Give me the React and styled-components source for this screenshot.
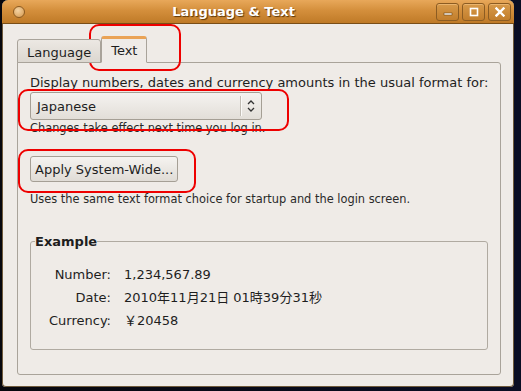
import styled, { createGlobalStyle } from "styled-components";

const Global = createGlobalStyle`
  html, body { margin: 0; padding: 0; }
  body {
    background: #05050f;
    font-family: "DejaVu Sans", "Noto Sans CJK JP", sans-serif;
    font-size: 13px;
    color: #1e1e1e;
  }
`;

const Desktop = styled.div`
  width: 521px;
  height: 391px;
  background: linear-gradient(90deg, #07070d 0%, #0a0d24 100%);
  overflow: hidden;
`;

const Window = styled.div`
  position: relative;
  margin-left: 2px;
  width: 512px;
  height: 387px;
  background: #efebe7;
  border-radius: 6px 6px 4px 4px;
  box-shadow: inset 0 0 0 1px #6f5a3c;
  display: flex;
  flex-direction: column;
  overflow: hidden;
`;

const TitleBar = styled.div`
  height: 23px;
  flex: none;
  display: flex;
  align-items: center;
  padding: 0 3px 0 11px;
  background: linear-gradient(#e8a85a 0%, #d48f3c 45%, #bf7a27 100%);
  border-bottom: 1px solid #7a4e17;
  border-radius: 6px 6px 0 0;
`;

const MenuDot = styled.div`
  width: 10px;
  height: 10px;
  border-radius: 50%;
  border: 1px solid #8a5a22;
  background: radial-gradient(circle at 40% 35%, #f4d3a3, #d4974c);
  flex: none;
`;

const Title = styled.div`
  flex: 1;
  text-align: center;
  font-weight: bold;
  font-size: 13px;
  color: #fff;
  text-shadow: 1px 1px 1px #5a3508;
  padding-left: 6px;
`;

const Controls = styled.div`
  display: flex;
  gap: 3px;
`;

const CtrlButton = styled.div`
  width: 21px;
  height: 16px;
  border: 1px solid #8c5c22;
  border-radius: 3px;
  background: linear-gradient(#d89a4a, #c27e2c);
  box-shadow: inset 0 1px 0 #eab46e;
  display: flex;
  align-items: center;
  justify-content: center;
`;

const Body = styled.div`
  flex: 1;
  padding: 12px 13px 12px 15px;
  display: flex;
  flex-direction: column;
`;

const TabRow = styled.div`
  display: flex;
  align-items: flex-end;
  height: 27px;
  margin-bottom: -1px;
  position: relative;
  z-index: 1;
`;

const Tab = styled.div`
  height: ${(p) => (p.$active ? "27px" : "24px")};
  box-sizing: border-box;
  padding: 0 9px;
  display: flex;
  align-items: center;
  border: 1px solid #a9a39a;
  border-bottom: ${(p) => (p.$active ? "1px solid #efebe7" : "1px solid #a9a39a")};
  border-top: ${(p) => (p.$active ? "3px solid #eaa356" : "1px solid #a9a39a")};
  border-radius: 3px 3px 0 0;
  background: ${(p) => (p.$active ? "#efebe7" : "linear-gradient(#ece8e3, #dcd7d0)")};
  font-size: 13px;
  color: #1e1e1e;
  padding-top: ${(p) => (p.$active ? "0" : "2px")};
`;

const Panel = styled.div`
  flex: 1;
  border: 1px solid #a9a39a;
  border-radius: 0 3px 3px 3px;
  padding: 12px 12px 24px 12px;
  display: flex;
  flex-direction: column;
`;

const Label = styled.div`
  font-size: 13px;
  line-height: 16px;
  white-space: nowrap;
`;

const Hint = styled.div`
  font-size: 11.4px;
  line-height: 14px;
  color: #2a2a2a;
  white-space: nowrap;
  margin-top: ${(p) => p.$top || 0}px;
`;

const Combo = styled.div`
  margin-top: 1px;
  width: 232px;
  height: 28px;
  box-sizing: border-box;
  border: 1px solid #a59f95;
  border-radius: 3px;
  background: linear-gradient(#f5f3f0, #e2ded8);
  display: flex;
  align-items: center;
`;

const ComboText = styled.div`
  flex: 1;
  padding-left: 6px;
  font-size: 13px;
`;

const ComboSep = styled.div`
  width: 1px;
  height: 20px;
  background: #c2bdb5;
  box-shadow: 1px 0 0 #fbfaf8;
`;

const ComboArrows = styled.div`
  width: 20px;
  display: flex;
  justify-content: center;
`;

const Button = styled.div`
  margin-top: 21px;
  align-self: flex-start;
  height: 26px;
  box-sizing: border-box;
  padding: 0 4px;
  border: 1px solid #a59f95;
  border-radius: 3px;
  background: linear-gradient(#f5f3f0, #e0dcd6);
  display: flex;
  align-items: center;
  font-size: 13px;
`;

const Frame = styled.fieldset`
  margin: 28px 0 0 0;
  padding: 18px 0 20px 18px;
  border: 1px solid #b0aaa1;
  border-radius: 3px;
  min-width: 0;
`;

const Legend = styled.legend`
  font-weight: bold;
  font-size: 13px;
  padding: 0;
  margin-left: -14px;
`;

const Grid = styled.div`
  display: grid;
  grid-template-columns: 62px auto;
  column-gap: 13px;
  row-gap: 7px;
  font-size: 13px;
  line-height: 16px;
`;

const Key = styled.div`
  text-align: right;
`;

const Mark = styled.div`
  position: absolute;
  border: 2px solid #ee0000;
  border-radius: 10px;
  pointer-events: none;
`;

const rows = [
  ["Number:", "1,234,567.89"],
  ["Date:", "2010年11月21日 01時39分31秒"],
  ["Currency:", "￥20458"],
];

export default function App() {
  return (
    <Desktop>
      <Global />
      <Window>
        <TitleBar>
          <MenuDot />
          <Title>Language &amp; Text</Title>
          <Controls>
            <CtrlButton>
              <svg width="10" height="10" viewBox="0 0 10 10">
                <rect x="1" y="6" width="8" height="2" fill="#fff" stroke="#6a4210" strokeWidth="0.6" />
              </svg>
            </CtrlButton>
            <CtrlButton>
              <svg width="10" height="10" viewBox="0 0 10 10">
                <rect x="1.5" y="1.5" width="7" height="7" fill="none" stroke="#fff" strokeWidth="1.6" />
              </svg>
            </CtrlButton>
            <CtrlButton>
              <svg width="10" height="10" viewBox="0 0 10 10">
                <path d="M1.5 1.5 L8.5 8.5 M8.5 1.5 L1.5 8.5" stroke="#fff" strokeWidth="2.4" strokeLinecap="square" />
              </svg>
            </CtrlButton>
          </Controls>
        </TitleBar>
        <Body>
          <TabRow>
            <Tab>Language</Tab>
            <Tab $active>Text</Tab>
          </TabRow>
          <Panel>
            <Label>Display numbers, dates and currency amounts in the usual format for:</Label>
            <Combo>
              <ComboText>Japanese</ComboText>
              <ComboSep />
              <ComboArrows>
                <svg width="10" height="14" viewBox="0 0 10 14">
                  <path d="M2 5 L5 2 L8 5 M2 9 L5 12 L8 9" fill="none" stroke="#333" strokeWidth="1.3" />
                </svg>
              </ComboArrows>
            </Combo>
            <Hint $top={1}>Changes take effect next time you log in.</Hint>
            <Button>Apply System-Wide...</Button>
            <Hint $top={10}>Uses the same text format choice for startup and the login screen.</Hint>
            <Frame>
              <Legend>Example</Legend>
              <Grid>
                {rows.map(([k, v]) => (
                  <>
                    <Key key={k}>{k}</Key>
                    <div key={k + "v"}>{v}</div>
                  </>
                ))}
              </Grid>
            </Frame>
          </Panel>
        </Body>
        <Mark style={{ left: 87, top: 24, width: 88, height: 43 }} />
        <Mark style={{ left: 16, top: 89, width: 267, height: 38 }} />
        <Mark style={{ left: 16, top: 149, width: 174, height: 40 }} />
      </Window>
    </Desktop>
  );
}
